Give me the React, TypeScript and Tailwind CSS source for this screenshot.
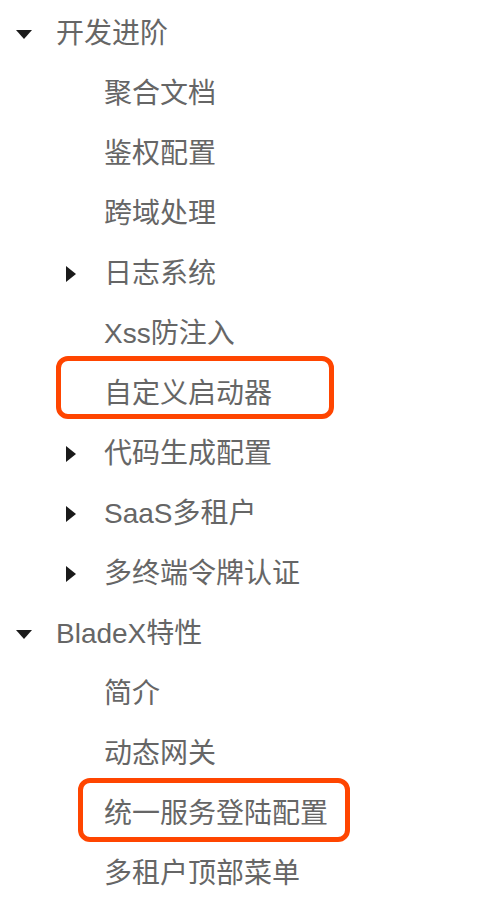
import React from "react";

type Node = { label: string; level: 0 | 1; arrow?: "down" | "right" };

const ITEMS: Node[] = [
  { label: "开发进阶", level: 0, arrow: "down" },
  { label: "聚合文档", level: 1 },
  { label: "鉴权配置", level: 1 },
  { label: "跨域处理", level: 1 },
  { label: "日志系统", level: 1, arrow: "right" },
  { label: "Xss防注入", level: 1 },
  { label: "自定义启动器", level: 1 },
  { label: "代码生成配置", level: 1, arrow: "right" },
  { label: "SaaS多租户", level: 1, arrow: "right" },
  { label: "多终端令牌认证", level: 1, arrow: "right" },
  { label: "BladeX特性", level: 0, arrow: "down" },
  { label: "简介", level: 1 },
  { label: "动态网关", level: 1 },
  { label: "统一服务登陆配置", level: 1 },
  { label: "多租户顶部菜单", level: 1 },
];

function Arrow({ dir }: { dir: "down" | "right" }) {
  if (dir === "down") {
    return (
      <svg width="16" height="9" viewBox="0 0 16 9" className="block">
        <path d="M0 0H16L8 9Z" fill="#1a1a1a" />
      </svg>
    );
  }
  return (
    <svg width="10" height="16" viewBox="0 0 10 16" className="block">
      <path d="M0 0L10 8L0 16Z" fill="#1a1a1a" />
    </svg>
  );
}

export default function App() {
  return (
    <div
      className="relative h-[910px] w-[488px] overflow-hidden bg-white pt-[4px] text-[28px] text-[#666]"
      style={{ fontFamily: '"Liberation Sans", "Noto Sans CJK SC", sans-serif' }}
    >
      <ul className="flex flex-col">
        {ITEMS.map((it) => (
          <li key={it.label} className="flex h-[60px] items-center">
            {it.level === 0 ? (
              <>
                <span className="flex w-[56px] justify-start pl-[16px]">
                  {it.arrow && <Arrow dir={it.arrow} />}
                </span>
                <span>{it.label}</span>
              </>
            ) : (
              <>
                <span className="flex w-[104px] justify-start pl-[66px]">
                  {it.arrow && <Arrow dir={it.arrow} />}
                </span>
                <span>{it.label}</span>
              </>
            )}
          </li>
        ))}
      </ul>

      {/* annotation boxes */}
      <div className="absolute left-[56px] top-[356px] h-[63px] w-[278px] rounded-[12px] border-[5px] border-[#ff4500]" />
      <div className="absolute left-[78px] top-[778px] h-[64px] w-[272px] rounded-[12px] border-[5px] border-[#ff4500]" />
    </div>
  );
}
